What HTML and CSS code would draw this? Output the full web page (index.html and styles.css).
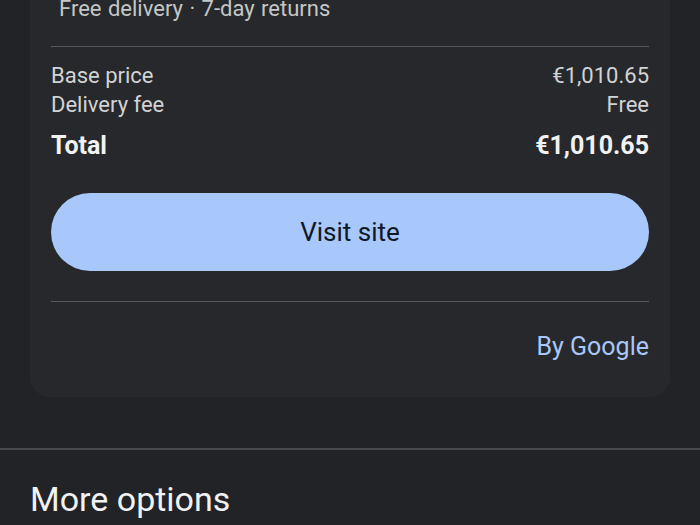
FILE: index.html
```html
<!DOCTYPE html>
<html lang="en">
<head>
<meta charset="utf-8">
<title>Price summary</title>
<link rel="stylesheet" href="styles.css">
</head>
<body>
<section class="card">
  <p class="meta">Free delivery · 7-day returns</p>
  <hr class="rule">
  <div class="rows">
    <div class="row"><span>Base price</span><span>€1,010.65</span></div>
    <div class="row"><span>Delivery fee</span><span>Free</span></div>
    <div class="row total"><span>Total</span><span>€1,010.65</span></div>
  </div>
  <button class="visit" type="button">Visit site</button>
  <hr class="rule rule-low">
  <div class="byline"><a class="by-google" href="#">By Google</a></div>
</section>
<hr class="page-rule">
<h2 class="more">More options</h2>
</body>
</html>
```

FILE: styles.css
```css
html, body {
  margin: 0;
  padding: 0;
  background: #222326;
  font-family: Roboto, "Noto Sans", sans-serif;
  overflow: hidden;
}

.card {
  margin: -40px 30px 0;
  padding: 36px 21px 35px;
  background: #27282b;
  border-radius: 0 0 20px 20px;
}

.meta {
  margin: 0 0 24px;
  padding-left: 8px;
  font-size: 22px;
  line-height: 26px;
  color: #c4c7c5;
  word-spacing: 1px;
}

.rule {
  margin: 0;
  border: 0;
  border-top: 1px solid #55575a;
}

.rows {
  padding-top: 14px;
}

.row {
  display: flex;
  justify-content: space-between;
  font-size: 22px;
  line-height: 29px;
  color: #d2d3d4;
}

.row.total {
  margin-top: 11px;
  font-size: 25px;
  line-height: 32px;
  font-weight: 700;
  color: #f1f2f3;
}

.visit {
  display: block;
  width: 100%;
  height: 78px;
  margin-top: 31px;
  border: 0;
  border-radius: 39px;
  background: #a8c7fa;
  color: #0f1826;
  font-family: Roboto, sans-serif;
  font-size: 26px;
  font-weight: 400;
}

.rule-low {
  margin-top: 30px;
}

.byline {
  display: flex;
  justify-content: flex-end;
  padding-top: 30px;
}

.by-google {
  font-size: 25px;
  line-height: 30px;
  color: #a8c7fa;
  text-decoration: none;
}

.page-rule {
  margin: 51px 0 0;
  border: 0;
  border-top: 2px solid #48494c;
}

.more {
  margin: 30px 0 0 30px;
  font-size: 34px;
  line-height: 38px;
  font-weight: 400;
  color: #f1f2f3;
}
```
